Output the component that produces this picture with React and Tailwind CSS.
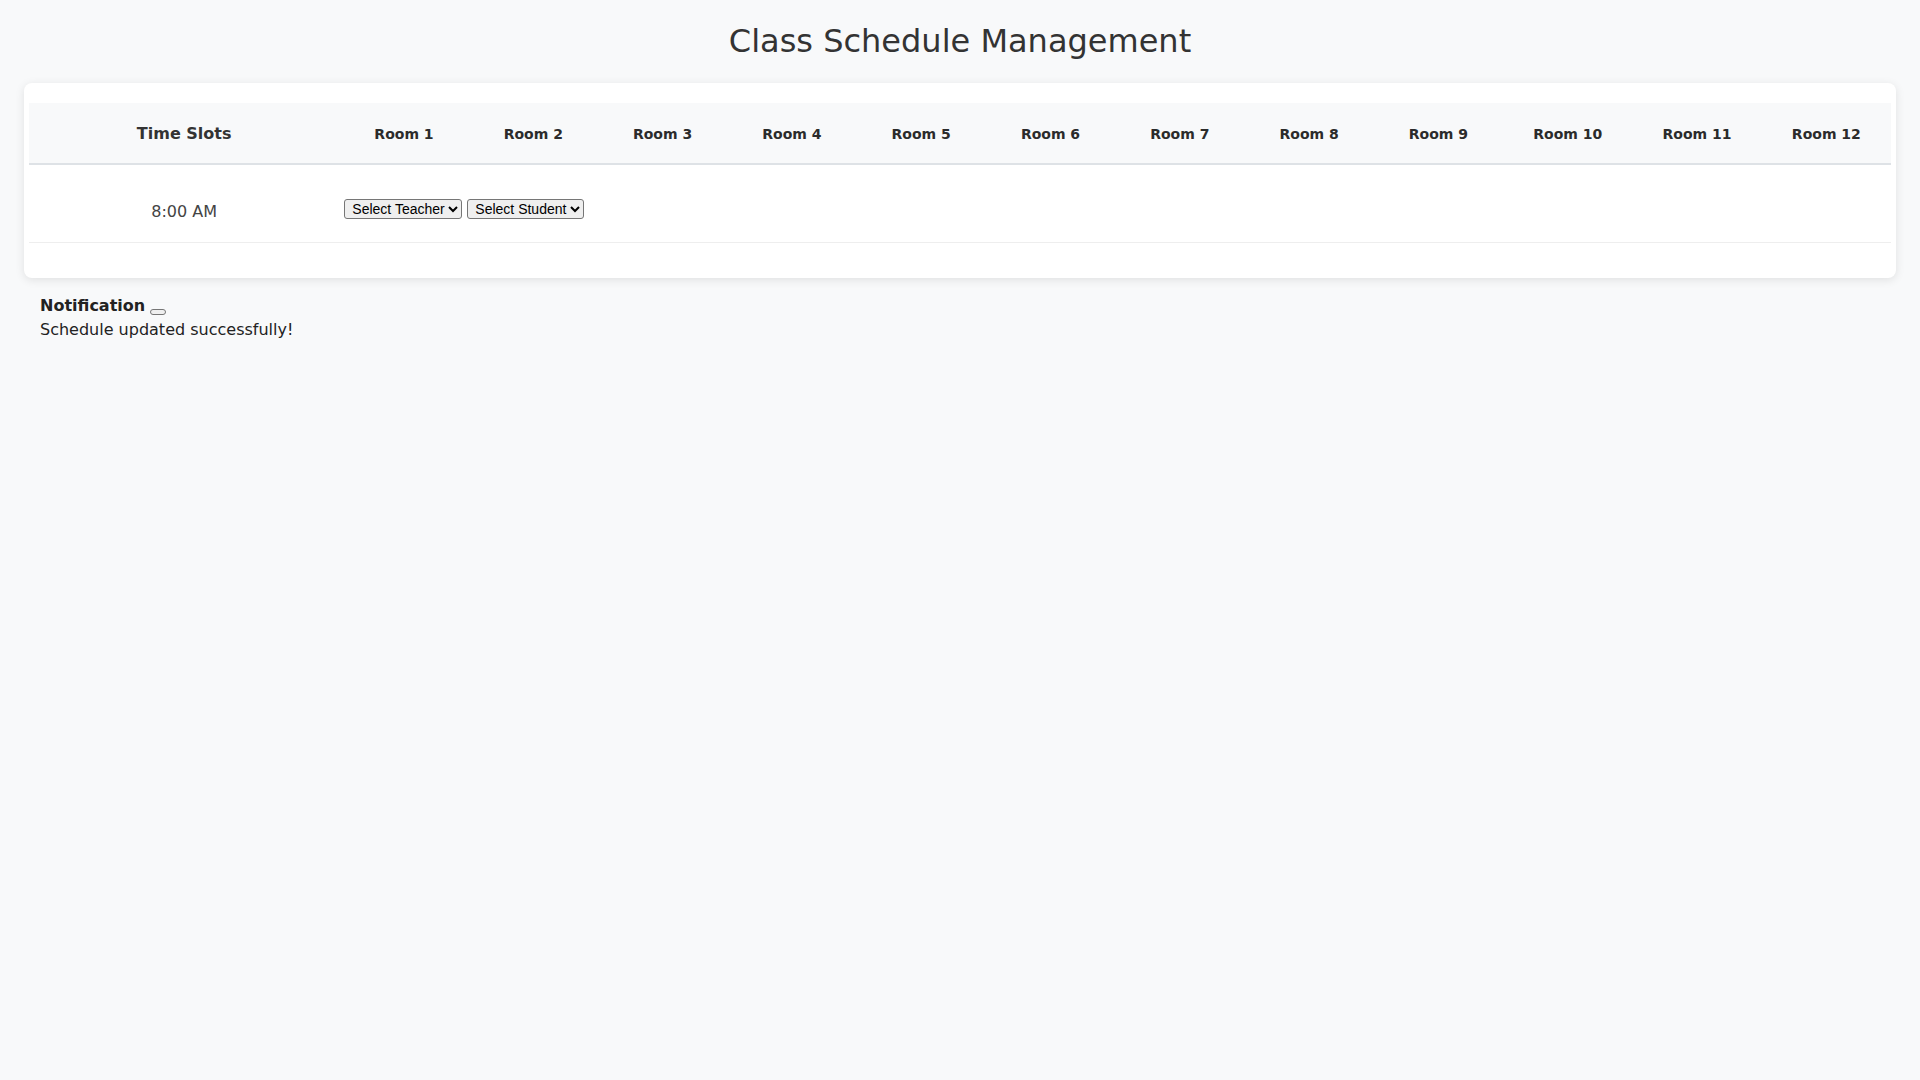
import { useState } from "react";

const rooms = Array.from({ length: 12 }, (_, i) => `Room ${i + 1}`);
const teachers = ["Mr. Smith", "Ms. Johnson", "Dr. Lee"];
const students = ["Alice", "Bob", "Charlie"];

export default function App() {
  const [slot, setSlot] = useState({ teacher: "", student: "" });
  const [notice, setNotice] = useState("Schedule updated successfully!");

  const onChange = (event) => {
    setSlot((prev) => ({ ...prev, [event.target.name]: event.target.value }));
    setNotice("Schedule updated successfully!");
  };

  return (
    <div className="min-h-screen bg-[#f8f9fa] px-[24px] font-['DejaVu_Sans',sans-serif] text-[#333]">
      <h1 className="pt-[21px] text-center text-[32px] leading-[40px] font-normal text-[#333]">
        Class Schedule Management
      </h1>

      <div className="mt-[22px] rounded-[8px] bg-white px-[5px] pt-[20px] pb-[35px] shadow-[0_2px_10px_rgba(0,0,0,0.1)]">
        <div className="grid grid-cols-[minmax(0,2.4fr)_repeat(12,minmax(0,1fr))] h-[62px] items-center border-b-2 border-[#dee2e6] bg-[#f8f9fa] pt-[2px]">
          <div className="text-center text-[16px] font-bold">Time Slots</div>
          {rooms.map((room) => (
            <div key={room} className="text-center text-[14px] font-bold text-[#2b2b2b]">
              {room}
            </div>
          ))}
        </div>

        <div className="grid grid-cols-[minmax(0,2.4fr)_repeat(12,minmax(0,1fr))] h-[78px] items-start border-b border-[#eeeeee] pt-[34px]">
          <div className="pt-[1px] text-center text-[16px] leading-[24px] text-[#444]">8:00 AM</div>
          <div className="flex gap-[5px] whitespace-nowrap pl-[5px]">
            <select
              name="teacher"
              value={slot.teacher}
              onChange={onChange}
              className="h-[20px] shrink-0 rounded-[3px] border border-[#767676] bg-[#efefef] pl-[3px] font-['Liberation_Sans',Arial,sans-serif] text-[14px] text-black"
            >
              <option value="">Select Teacher</option>
              {teachers.map((t) => (
                <option key={t}>{t}</option>
              ))}
            </select>
            <select
              name="student"
              value={slot.student}
              onChange={onChange}
              className="h-[20px] shrink-0 rounded-[3px] border border-[#767676] bg-[#efefef] pl-[3px] font-['Liberation_Sans',Arial,sans-serif] text-[14px] text-black"
            >
              <option value="">Select Student</option>
              {students.map((s) => (
                <option key={s}>{s}</option>
              ))}
            </select>
          </div>
          {rooms.slice(1).map((room) => (
            <div key={room} />
          ))}
        </div>
      </div>

      {notice && (
        <div className="mt-[16px] px-[16px] text-[16px] leading-[24px] text-[#222]">
          <div>
            <strong className="font-bold">Notification</strong>{" "}
            <button
              type="button"
              onClick={() => setNotice("")}
              className="inline-block h-[6px] w-[16px] rounded-[3px] border border-[#767676] bg-[#efefef] align-[-3px]"
            />
          </div>
          <div>{notice}</div>
        </div>
      )}
    </div>
  );
}
